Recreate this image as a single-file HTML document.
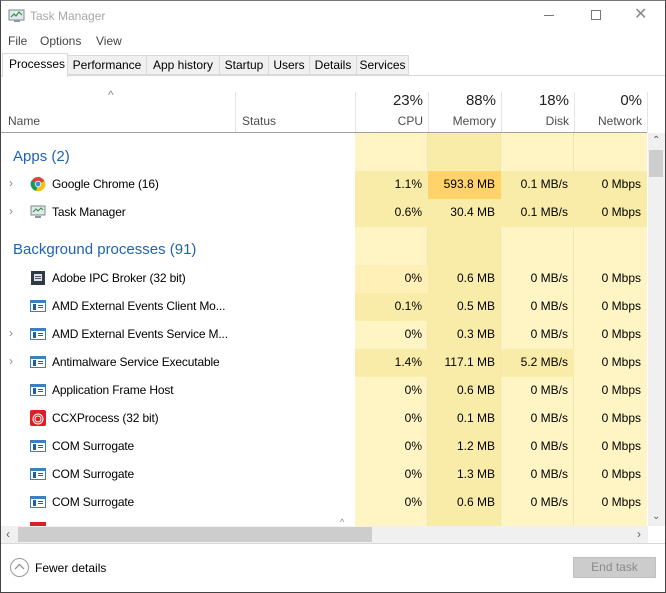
<!DOCTYPE html>
<html><head><meta charset="utf-8"><style>
*{margin:0;padding:0;box-sizing:border-box}
body{width:666px;height:593px;background:#fff;font-family:"Liberation Sans",sans-serif;font-size:12px;color:#000;position:relative;overflow:hidden}
.a{position:absolute}
.win{position:absolute;left:0;top:0;width:666px;height:593px;border:1px solid #444;border-top:1px solid #777}
.tab{position:absolute;top:55px;height:20px;background:#f0f0f0;border:1px solid #d9d9d9;font-size:12px;line-height:18px;text-align:center;color:#000}
.hdr{position:absolute;text-align:right;color:#4c4c4c}
.l{background:#fff4c4}.m{background:#f9eca8}.h{background:#ffd36a}
.ic{position:absolute;left:30px;width:16px;height:14px}
.grp{position:absolute;left:12px;font-size:15px;color:#1e63b4}
.nm{position:absolute;left:52px;letter-spacing:-0.15px;white-space:nowrap}
</style></head><body>
<div class="win"></div>
<svg class="a" style="left:8px;top:8px" width="18" height="16" viewBox="0 0 18 16"><rect x="1" y="2" width="15" height="10" fill="#dfe9ee" stroke="#7a8a92"/><polyline points="3,9 6,6 8,8 11,4 14,7" fill="none" stroke="#3a8a3a" stroke-width="1.2"/><rect x="6" y="12" width="6" height="2" fill="#8a9aa2"/></svg>
<div class="a" style="left:30px;top:9px;font-size:12px;color:#a8a8a8">Task Manager</div>
<div class="a" style="left:544px;top:15px;width:10px;height:1px;background:#777"></div>
<div class="a" style="left:591px;top:10px;width:10px;height:10px;border:1px solid #777"></div>
<div class="a" style="left:634px;top:4px;font-size:16px;color:#888">✕</div>
<div class="a" style="left:8px;top:34px;color:#444">File</div>
<div class="a" style="left:40px;top:34px;color:#444">Options</div>
<div class="a" style="left:96px;top:34px;color:#444">View</div>
<div class="a" style="left:1px;top:75px;width:664px;height:1px;background:#d9d9d9"></div>
<div class="tab" style="left:67px;width:80px">Performance</div>
<div class="tab" style="left:146px;width:74px">App history</div>
<div class="tab" style="left:219px;width:50px">Startup</div>
<div class="tab" style="left:268px;width:42px">Users</div>
<div class="tab" style="left:309px;width:48px">Details</div>
<div class="tab" style="left:356px;width:53px">Services</div>
<div class="a" style="left:2px;top:53px;width:66px;height:24px;background:#fff;border:1px solid #d9d9d9;border-bottom:none;line-height:21px;padding-left:6px">Processes</div>
<div class="a" style="left:108px;top:88px;color:#888;font-size:12px">^</div>
<div class="a" style="left:8px;top:114px;color:#4c4c4c">Name</div>
<div class="a" style="left:235px;top:92px;width:1px;height:40px;background:#e5e5e5"></div>
<div class="a" style="left:242px;top:114px;color:#4c4c4c">Status</div>
<div class="a" style="left:355px;top:92px;width:1px;height:40px;background:#e5e5e5"></div>
<div class="a" style="left:428px;top:92px;width:1px;height:40px;background:#e5e5e5"></div>
<div class="a" style="left:501px;top:92px;width:1px;height:40px;background:#e5e5e5"></div>
<div class="a" style="left:574px;top:92px;width:1px;height:40px;background:#e5e5e5"></div>
<div class="a" style="left:647px;top:92px;width:1px;height:40px;background:#e5e5e5"></div>
<div class="hdr" style="left:355px;width:68px;top:92px;font-size:15px;color:#222">23%</div>
<div class="hdr" style="left:355px;width:68px;top:114px">CPU</div>
<div class="hdr" style="left:428px;width:68px;top:92px;font-size:15px;color:#222">88%</div>
<div class="hdr" style="left:428px;width:68px;top:114px">Memory</div>
<div class="hdr" style="left:501px;width:68px;top:92px;font-size:15px;color:#222">18%</div>
<div class="hdr" style="left:501px;width:68px;top:114px">Disk</div>
<div class="hdr" style="left:574px;width:68px;top:92px;font-size:15px;color:#222">0%</div>
<div class="hdr" style="left:574px;width:68px;top:114px">Network</div>
<div class="a" style="left:1px;top:132px;width:646px;height:1px;background:#a0a0a0"></div>

<div class="a" style="left:1px;top:133px;width:646px;height:393px;overflow:hidden">
<div class="a l" style="left:354px;top:0;width:73px;height:393px"></div>
<div class="a m" style="left:427px;top:0;width:73px;height:393px"></div>
<div class="a l" style="left:500px;top:0;width:73px;height:393px"></div>
<div class="a l" style="left:573px;top:0;width:73px;height:393px"></div>
<div class="a" style="left:426px;top:0;width:1px;height:393px;background:#f2e6b0"></div>
<div class="a" style="left:499px;top:0;width:1px;height:393px;background:#f2e6b0"></div>
<div class="a" style="left:572px;top:0;width:1px;height:393px;background:#f2e6b0"></div>
<div class="grp" style="top:15px">Apps (2)</div>
<div class="a m" style="left:354px;top:38px;width:73px;height:28px"></div>
<div class="a h" style="left:427px;top:38px;width:73px;height:28px"></div>
<div class="a m" style="left:500px;top:38px;width:146px;height:28px"></div>
<div class="a m" style="left:354px;top:66px;width:292px;height:28px"></div>
<div class="a" style="left:354px;top:132px;width:73px;height:28px;background:#fff0b8"></div>
<div class="a m" style="left:354px;top:160px;width:73px;height:28px"></div>
<div class="a m" style="left:354px;top:216px;width:73px;height:28px"></div>
<div class="a m" style="left:500px;top:216px;width:73px;height:28px"></div>
<div class="grp" style="top:108px">Background processes (91)</div>
</div>
<div id="list"></div>
<script>
var R=[
[184,1,'ch','Google Chrome (16)','1.1%','593.8 MB','0.1 MB/s','0 Mbps'],
[212,1,'tm','Task Manager','0.6%','30.4 MB','0.1 MB/s','0 Mbps'],
[278,0,'ad','Adobe IPC Broker (32 bit)','0%','0.6 MB','0 MB/s','0 Mbps'],
[306,0,'w','AMD External Events Client Mo...','0.1%','0.5 MB','0 MB/s','0 Mbps'],
[334,1,'w','AMD External Events Service M...','0%','0.3 MB','0 MB/s','0 Mbps'],
[362,1,'w','Antimalware Service Executable','1.4%','117.1 MB','5.2 MB/s','0 Mbps'],
[390,0,'w','Application Frame Host','0%','0.6 MB','0 MB/s','0 Mbps'],
[418,0,'cc','CCXProcess (32 bit)','0%','0.1 MB','0 MB/s','0 Mbps'],
[446,0,'w','COM Surrogate','0%','1.2 MB','0 MB/s','0 Mbps'],
[474,0,'w','COM Surrogate','0%','1.3 MB','0 MB/s','0 Mbps'],
[502,0,'w','COM Surrogate','0%','0.6 MB','0 MB/s','0 Mbps']];
var I={
ch:['16','16','<circle cx="8" cy="8" r="7" fill="#db4437"/><path d="M8 8 L14.5 5 A7 7 0 0 1 6 14.8Z" fill="#f4c20d"/><path d="M8 8 L6 14.8 A7 7 0 0 1 1.5 4.5Z" fill="#0f9d58"/><circle cx="8" cy="8" r="3.2" fill="#fff"/><circle cx="8" cy="8" r="2.4" fill="#4285f4"/>'],
tm:['16','14','<rect x="1" y="1" width="14" height="9" fill="#dfe9ee" stroke="#7a8a92"/><polyline points="3,7 6,4 8,6 11,3 13,5" fill="none" stroke="#3a8a3a"/><rect x="5" y="11" width="6" height="2" fill="#8a9aa2"/>'],
ad:['16','16','<rect x="1" y="1" width="14" height="14" fill="#2f3b40"/><rect x="4" y="4" width="8" height="7" fill="#dde"/><rect x="5" y="6" width="6" height="1" fill="#556"/><rect x="5" y="8" width="6" height="1" fill="#556"/>'],
w:['16','14','<rect x="0.5" y="1.5" width="15" height="11" fill="#fff" stroke="#3b7fc4"/><rect x="1" y="2" width="14" height="2" fill="#3b7fc4"/><rect x="3" y="5" width="3" height="6" fill="#1f5fa8"/><rect x="8" y="6" width="5" height="1" fill="#555"/><rect x="8" y="8" width="5" height="1" fill="#555"/>'],
cc:['16','16','<rect x="0" y="0" width="16" height="16" rx="2" fill="#da1f26"/><circle cx="8" cy="9" r="5" fill="none" stroke="#fff" stroke-width="1"/><circle cx="8" cy="9" r="3" fill="none" stroke="#fff" stroke-width="1"/>']};
var h='';
R.forEach(function(r){var t=r[0]-7;var ic=I[r[2]];
if(r[1])h+='<div class="a" style="left:9px;top:'+(t-1)+'px;color:#888;font-size:12px">&#8250;</div>';
h+='<svg class="a" style="left:30px;top:'+(r[0]-ic[1]/2)+'px" width="'+ic[0]+'" height="'+ic[1]+'" viewBox="0 0 '+ic[0]+' '+ic[1]+'">'+ic[2]+'</svg>';
h+='<div class="nm" style="top:'+t+'px">'+r[3]+'</div>';
var xs=[355,428,501,574];for(var i=0;i<4;i++)h+='<div class="a" style="left:'+xs[i]+'px;width:67px;text-align:right;top:'+t+'px">'+r[4+i]+'</div>';});
h+='<div class="a" style="left:30px;top:522px;width:16px;height:4px;background:#da1f26"></div>';
document.getElementById('list').innerHTML=h;
</script>
<div class="a" style="left:648px;top:133px;width:17px;height:393px;background:#f0f0f0"></div>
<div class="a" style="left:652px;top:135px;font-size:10px;color:#606060">&#8963;</div>
<div class="a" style="left:649px;top:150px;width:14px;height:27px;background:#cdcdcd"></div>
<div class="a" style="left:652px;top:511px;font-size:10px;color:#606060">&#8964;</div>
<div class="a" style="left:340px;top:517px;font-size:9px;color:#888">^</div>
<div class="a" style="left:1px;top:526px;width:647px;height:17px;background:#f0f0f0"></div>
<div class="a" style="left:6px;top:527px;font-size:12px;color:#606060">&#8249;</div>
<div class="a" style="left:18px;top:527px;width:354px;height:15px;background:#cdcdcd"></div>
<div class="a" style="left:637px;top:527px;font-size:12px;color:#606060">&#8250;</div>
<div class="a" style="left:1px;top:543px;width:664px;height:1px;background:#d9d9d9"></div>
<div class="a" style="left:10px;top:558px;width:19px;height:19px;border:1px solid #999;border-radius:50%"></div>
<svg class="a" style="left:14px;top:563px" width="11" height="8" viewBox="0 0 11 8"><polyline points="1,6 5.5,1.5 10,6" fill="none" stroke="#888" stroke-width="1.2"/></svg>
<div class="a" style="left:35px;top:561px;font-size:12px">Fewer details</div>
<div class="a" style="left:573px;top:557px;width:83px;height:21px;background:#ccc;border:1px solid #bfbfbf;color:#8a8a8a;text-align:center;line-height:19px">End task</div>
</body></html>
